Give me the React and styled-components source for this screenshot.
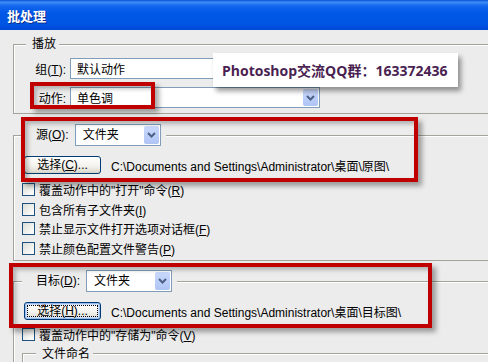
import React from 'react';
import styled, { createGlobalStyle, css } from 'styled-components';

const Global = createGlobalStyle`
html, body {
  margin: 0;
  padding: 0;
  background: #ececec;
}
body {
  font-family: "Liberation Sans", "Noto Sans CJK SC", sans-serif;
  font-size: 12px;
  color: #000;
}
`

const Screen = styled.div`
position: relative;
width: 488px;
height: 362px;
overflow: hidden;
background: #ececec;
`

const TitleBar = styled.div`
height: 30px;
box-sizing: border-box;
display: flex;
align-items: center;
padding-left: 7px;
background: linear-gradient(to bottom, #0a4fd0 0%, #3d8df7 7%, #1266ee 20%, #0057e6 45%, #0055e3 80%, #0048d8 100%);
color: #fff;
font-family: "Noto Sans CJK SC", sans-serif;
font-weight: 700;
font-size: 13px;
text-shadow: 1px 1px 0 #0b2f8f;
`

const Body = styled.div`
width: 560px;
box-sizing: border-box;
padding: 7px 0 0 13px;
`

const Group = styled.fieldset`
margin: ${p => p.$mt || 0}px 0 0 0;
padding: ${p => p.$pt}px 8px ${p => p.$pb}px 8px;
border: 1px solid #a3a39c;
box-shadow: inset 1px 1px 0 #fff;
min-width: 0;
`

const Legend = styled.legend`
margin-left: ${p => p.$ml || 0}px;
padding: 0 ${p => p.$pr || 3}px 0 ${p => p.$pl || 0}px;
background: #ececec;
line-height: 14px;
`

const LegendRow = styled.span`
display: flex;
align-items: center;
gap: 6px;
`

const Key = styled.span`
text-decoration: underline;
`

const FieldGrid = styled.div`
display: grid;
grid-template-columns: 44px 250px;
column-gap: 4px;
row-gap: 8px;
align-items: center;
`

const FieldLabel = styled.span`
text-align: right;
white-space: nowrap;
`

const Combo = styled.div`
width: ${p => p.$w}px;
height: ${p => p.$h || 21}px;
box-sizing: border-box;
border: 1px solid #7f9db9;
background: #fff;
display: flex;
align-items: center;
justify-content: space-between;
padding-left: ${p => p.$pl || 6}px;
`

const ComboText = styled.span`
white-space: nowrap;
`

const ArrowBox = styled.span`
align-self: stretch;
width: 15px;
margin: 1px;
border-radius: 2px;
background: linear-gradient(to bottom, #cbdafc 0%, #bccff9 50%, #aec4f4 100%);
display: flex;
align-items: center;
justify-content: center;
`

const PushButton = styled.button`
width: 77px;
height: 18px;
margin: 0 0 0 2px;
padding: 0;
box-sizing: border-box;
border: 1px solid #003c74;
border-radius: 3px;
background: linear-gradient(to bottom, #ffffff 0%, #f4f3ee 55%, #e3e1d8 85%, #d6d0c5 100%);
font: inherit;
color: #000;
line-height: 14px;
${p => p.$focused && css`
  box-shadow: inset 0 0 0 1px #9bbcf0, inset 0 0 0 2px #cfe0fb;
  outline: 1px dotted #000;
  outline-offset: -4px;
`}
`

const ButtonRow = styled.div`
display: flex;
align-items: center;
gap: 10px;
`

const Path = styled.span`
white-space: nowrap;
`

const CheckList = styled.div`
margin-top: ${p => p.$mt}px;
display: flex;
flex-direction: column;
`

const CheckRow = styled.div`
height: 19.5px;
display: flex;
align-items: center;
gap: 4px;
white-space: nowrap;
`

const Box = styled.span`
width: 13px;
height: 13px;
box-sizing: border-box;
border: 1px solid #1c5180;
background: linear-gradient(135deg, #dcdcd7 0%, #f2f2ef 60%, #ffffff 100%);
`

const Mark = styled.div`
position: absolute;
left: ${p => p.$x}px;
top: ${p => p.$y}px;
width: ${p => p.$w}px;
height: ${p => p.$h}px;
box-sizing: border-box;
border: 4px solid #c00000;
box-shadow: 4px 4px 5px rgba(0, 0, 0, 0.35), inset 3px 3px 4px rgba(0, 0, 0, 0.25);
pointer-events: none;
`

const Banner = styled.div`
position: absolute;
left: 213px;
top: 53px;
width: 245px;
height: 34px;
box-sizing: border-box;
padding-left: 9px;
display: flex;
align-items: center;
background: #fff;
box-shadow: 3px 4px 5px rgba(0, 0, 0, 0.4);
color: #4a1f52;
font-family: "Open Sans", "Noto Sans CJK SC", sans-serif;
font-weight: 700;
font-size: 14px;
white-space: nowrap;
`

const Chevron = () => (
  <svg width="9" height="6" viewBox="0 0 9 6">
    <path d="M1 1 L4.5 4.5 L8 1" fill="none" stroke="#4d6185" strokeWidth="2" />
  </svg>
)

const Select = ({ w, h, pl, children }) => (
  <Combo $w={w} $h={h} $pl={pl}>
    <ComboText>{children}</ComboText>
    <ArrowBox><Chevron /></ArrowBox>
  </Combo>
)

const Check = ({ children }) => (
  <CheckRow>
    <Box />
    <span>{children}</span>
  </CheckRow>
)

const App = () => {
  return (
    <Screen>
      <Global />
      <TitleBar>批处理</TitleBar>
      <Body>
        <Group $pt={7} $pb={5}>
          <Legend $ml={4} $pl={6}>播放</Legend>
          <FieldGrid>
            <FieldLabel>组(<Key>T</Key>):</FieldLabel>
            <Select w={250}>默认动作</Select>
            <FieldLabel>动作:</FieldLabel>
            <Select w={250}>单色调</Select>
          </FieldGrid>
        </Group>

        <Group $mt={10} $pt={10} $pb={2}>
          <Legend $pl={14} $pr={5}>
            <LegendRow>
              <span>源(<Key>O</Key>):</span>
              <Select w={86} h={22} pl={7}>文件夹</Select>
            </LegendRow>
          </Legend>
          <ButtonRow>
            <PushButton>选择(<Key>C</Key>)...</PushButton>
            <Path>C:\Documents and Settings\Administrator\桌面\原图\</Path>
          </ButtonRow>
          <CheckList $mt={6}>
            <Check>覆盖动作中的"打开"命令(<Key>R</Key>)</Check>
            <Check>包含所有子文件夹(<Key>I</Key>)</Check>
            <Check>禁止显示文件打开选项对话框(<Key>F</Key>)</Check>
            <Check>禁止颜色配置文件警告(<Key>P</Key>)</Check>
          </CheckList>
        </Group>

        <Group $mt={9} $pt={10} $pb={20}>
          <Legend $pl={14} $pr={5}>
            <LegendRow>
              <span>目标(<Key>D</Key>):</span>
              <Select w={86} h={22} pl={7}>文件夹</Select>
            </LegendRow>
          </Legend>
          <ButtonRow>
            <PushButton $focused>选择(<Key>H</Key>)...</PushButton>
            <Path>C:\Documents and Settings\Administrator\桌面\目标图\</Path>
          </ButtonRow>
          <CheckList $mt={5}>
            <Check>覆盖动作中的"存储为"命令(<Key>V</Key>)</Check>
          </CheckList>
          <Group $mt={2} $pt={6} $pb={40}>
            <Legend $ml={5} $pl={6}>文件命名</Legend>
          </Group>
        </Group>
      </Body>

      <Banner>Photoshop交流QQ群：163372436</Banner>
      <Mark $x={30} $y={82} $w={125} $h={27} />
      <Mark $x={21} $y={117} $w={397} $h={65} />
      <Mark $x={9} $y={263} $w={423} $h={65} />
    </Screen>
  )
}

export default App;
